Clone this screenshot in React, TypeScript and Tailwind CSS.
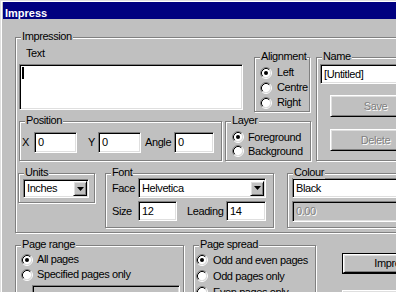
import React from "react";

const sunken =
  "border border-t-[#808080] border-l-[#808080] border-b-white border-r-white shadow-[inset_1px_1px_0_#000,inset_-1px_-1px_0_#dfdfdf]";
const raised =
  "border border-t-white border-l-white border-b-black border-r-black shadow-[inset_1px_1px_0_#dfdfdf,inset_-1px_-1px_0_#808080]";
const group =
  "relative shrink-0 border border-[#808080] shadow-[inset_1px_1px_0_#fff,1px_1px_0_#fff]";
const legend =
  "absolute -top-[8px] left-[5px] px-[1px] bg-[#c0c0c0] leading-[13px] whitespace-nowrap";
const disabledText = "text-[#808080] [text-shadow:1px_1px_0_#fff]";

function Radio({ checked }: { checked?: boolean }) {
  return (
    <svg width="12" height="12" viewBox="0 0 12 12" className="shrink-0">
      <circle cx="6" cy="6" r="4.3" fill="#fff" />
      <path d="M2.11 9.89 A5.5 5.5 0 0 1 9.89 2.11" stroke="#808080" fill="none" />
      <path d="M9.89 2.11 A5.5 5.5 0 0 1 2.11 9.89" stroke="#fff" fill="none" />
      <path d="M2.82 9.18 A4.5 4.5 0 0 1 9.18 2.82" stroke="#000" fill="none" />
      <path d="M9.18 2.82 A4.5 4.5 0 0 1 2.82 9.18" stroke="#dfdfdf" fill="none" />
      {checked && <circle cx="6" cy="6" r="2" fill="#000" />}
    </svg>
  );
}

function DropButton() {
  return (
    <div
      className={`${raised} bg-[#c0c0c0] w-[14px] h-[15px] mr-[1px] flex items-center justify-center shrink-0`}
    >
      <svg width="7" height="4" viewBox="0 0 7 4">
        <path d="M0 0 H7 L3.5 4 Z" fill="#000" />
      </svg>
    </div>
  );
}

export default function App() {
  return (
    <div className="w-[396px] h-[292px] overflow-hidden bg-[#c0c0c0] pt-[2px] pl-[3px] shadow-[inset_1px_1px_0_#dfdfdf,inset_2px_2px_0_#fff] font-['Liberation_Sans',Arial,sans-serif] text-[11px] leading-[13px] tracking-[-0.4px] text-black">
      {/* Title bar */}
      <div className="h-[17px] bg-[#000080] text-white font-bold text-[11px] leading-[12px] tracking-normal pl-[2px] pt-[5px]">
        Impress
      </div>

      <div className="pl-[12px] pt-[18px]">
        {/* Impression group */}
        <div className={`${group} w-[420px] h-[196px] pl-[3px] pt-[9px]`}>
          <span className={legend}>Impression</span>

          <div className="flex">
            {/* Left column */}
            <div className="w-[292px] shrink-0">
              <div className="flex">
                <div className="shrink-0">
                  <div className="ml-[7px] h-[13px]">Text</div>
                  <div className={`${sunken} bg-white mt-[4px] w-[224px] h-[46px] pl-[2px] pt-[2px]`}>
                    <div className="w-[2px] h-[12px] bg-black" />
                  </div>
                </div>
                <div className={`${group} ml-[11px] mt-[10px] w-[56px] h-[55px] pl-[5px] pt-[7px]`}>
                  <span className={legend}>Alignment</span>
                  <div className="h-[15px] flex items-center">
                    <Radio checked />
                    <span className="ml-[5px]">Left</span>
                  </div>
                  <div className="h-[15px] flex items-center">
                    <Radio />
                    <span className="ml-[5px]">Centre</span>
                  </div>
                  <div className="h-[15px] flex items-center">
                    <Radio />
                    <span className="ml-[5px]">Right</span>
                  </div>
                </div>
              </div>

              <div className="flex mt-[9px]">
                <div className={`${group} w-[203px] h-[40px] pl-[2px] pt-[10px]`}>
                  <span className={legend}>Position</span>
                  <div className="flex items-center">
                    <span className="w-[12px] shrink-0">X</span>
                    <div className={`${sunken} bg-white w-[43px] h-[21px] pl-[3px] flex items-center shrink-0`}>0</div>
                    <span className="ml-[11px] w-[10px] shrink-0">Y</span>
                    <div className={`${sunken} bg-white w-[43px] h-[21px] pl-[3px] flex items-center shrink-0`}>0</div>
                    <span className="ml-[4px] w-[29px] shrink-0">Angle</span>
                    <div className={`${sunken} bg-white w-[40px] h-[21px] pl-[3px] flex items-center shrink-0`}>0</div>
                  </div>
                </div>
                <div className={`${group} ml-[3px] w-[86px] h-[40px] pl-[6px] pt-[8px]`}>
                  <span className={legend}>Layer</span>
                  <div className="h-[14px] flex items-center">
                    <Radio checked />
                    <span className="ml-[4px]">Foreground</span>
                  </div>
                  <div className="h-[14px] flex items-center">
                    <Radio />
                    <span className="ml-[4px]">Background</span>
                  </div>
                </div>
              </div>
            </div>

            {/* Name group */}
            <div className={`${group} ml-[5px] mt-[10px] w-[110px] h-[104px] pl-[3px] pt-[6px]`}>
              <span className={legend}>Name</span>
              <div className={`${sunken} bg-white w-[120px] h-[20px] pl-[3px] flex items-center`}>[Untitled]</div>
              <div className={`${raised} bg-[#c0c0c0] ml-[10px] mt-[11px] w-[91px] h-[22px] flex items-center justify-center ${disabledText}`}>
                Save
              </div>
              <div className={`${raised} bg-[#c0c0c0] ml-[10px] mt-[12px] w-[91px] h-[22px] flex items-center justify-center ${disabledText}`}>
                Delete
              </div>
            </div>
          </div>

          {/* Row 3 */}
          <div className="flex mt-[12px] -ml-[1px]">
            <div className={`${group} w-[77px] h-[30px] pl-[4px] pt-[5px]`}>
              <span className={legend}>Units</span>
              <div className={`${sunken} bg-white w-[66px] h-[19px] flex items-center`}>
                <span className="flex-1 pl-[3px]">Inches</span>
                <DropButton />
              </div>
            </div>

            <div className={`${group} ml-[10px] w-[169px] h-[55px] pl-[6px] pt-[4px]`}>
              <span className={legend}>Font</span>
              <div className="flex items-center">
                <span className="w-[26px] shrink-0">Face</span>
                <div className={`${sunken} bg-white w-[128px] h-[20px] flex items-center shrink-0`}>
                  <span className="flex-1 pl-[3px]">Helvetica</span>
                  <DropButton />
                </div>
              </div>
              <div className="flex items-center mt-[3px]">
                <span className="w-[26px] shrink-0">Size</span>
                <div className={`${sunken} bg-white w-[39px] h-[20px] pl-[3px] flex items-center shrink-0`}>12</div>
                <span className="ml-[10px] w-[39px] shrink-0">Leading</span>
                <div className={`${sunken} bg-white w-[40px] h-[20px] pl-[3px] flex items-center shrink-0`}>14</div>
              </div>
            </div>

            <div className={`${group} ml-[13px] w-[120px] h-[55px] pl-[4px] pt-[4px]`}>
              <span className={legend}>Colour</span>
              <div className={`${sunken} bg-white w-[130px] h-[20px] pl-[3px] flex items-center`}>Black</div>
              <div className={`${sunken} bg-[#c0c0c0] mt-[3px] w-[130px] h-[21px] pl-[3px] flex items-center ${disabledText}`}>
                0.00
              </div>
            </div>
          </div>
        </div>

        {/* Row 4 */}
        <div className="flex mt-[12px]">
          <div className={`${group} w-[169px] h-[70px] pl-[5px] pt-[6px]`}>
            <span className={legend}>Page range</span>
            <div className="h-[15px] flex items-center">
              <Radio checked />
              <span className="ml-[4px]">All pages</span>
            </div>
            <div className="h-[15px] flex items-center">
              <Radio />
              <span className="ml-[4px]">Specified pages only</span>
            </div>
            <div className={`${sunken} bg-[#c0c0c0] ml-[11px] mt-[3px] w-[148px] h-[21px]`} />
          </div>

          <div className={`${group} ml-[9px] w-[123px] h-[70px] pl-[2px] pt-[6px]`}>
            <span className={legend}>Page spread</span>
            <div className="h-[16px] flex items-center">
              <Radio checked />
              <span className="ml-[5px]">Odd and even pages</span>
            </div>
            <div className="h-[16px] flex items-center">
              <Radio />
              <span className="ml-[5px]">Odd pages only</span>
            </div>
            <div className="h-[16px] flex items-center">
              <Radio />
              <span className="ml-[5px]">Even pages only</span>
            </div>
          </div>

          <div className="ml-[26px] mt-[8px] shrink-0">
            <div className="border border-black w-[101px] h-[21px]">
              <div className={`${raised} bg-[#c0c0c0] w-full h-full flex items-center justify-center`}>
                Impress
              </div>
            </div>
            <div className={`${raised} bg-[#c0c0c0] mt-[16px] w-[101px] h-[21px]`} />
          </div>
        </div>
      </div>
    </div>
  );
}
